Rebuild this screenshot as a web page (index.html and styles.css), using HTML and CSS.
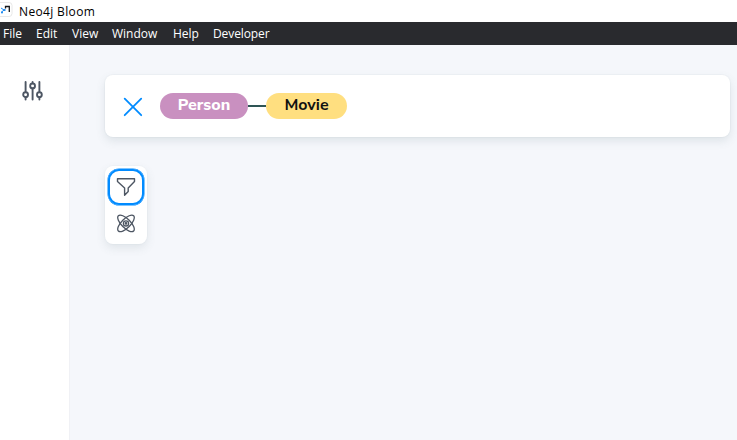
FILE: index.html
```html
<!DOCTYPE html>
<html lang="en">
<head>
<meta charset="utf-8">
<title>Neo4j Bloom</title>
<link rel="stylesheet" href="styles.css">
</head>
<body>
<header class="titlebar">
  <svg class="logo" width="14" height="16" viewBox="0 0 14 16" fill="none">
    <rect x="-4" y=".5" width="16" height="14" rx="3" fill="#fff" stroke="#e8e8e8"/>
    <path d="M5.5 6.5V4.5H9.3V10" stroke="#15171a" stroke-width="1.3"/>
    <path d="M1 6L4 8L1 10.5" stroke="#1687f0" stroke-width="1"/>
    <circle cx="4.6" cy="8" r="1.1" fill="#1687f0"/>
    <circle cx="2" cy="10.4" r="1" fill="#1687f0"/>
  </svg>
  <span class="title">Neo4j Bloom</span>
</header>
<nav class="menubar">
  <span class="file">File</span><span class="edit">Edit</span><span class="view">View</span><span class="window">Window</span><span class="help">Help</span><span class="developer">Developer</span>
</nav>
<div class="app">
  <aside class="sidebar">
    <svg width="22" height="20" viewBox="0 0 22 20" fill="none" stroke="#4d5663" stroke-width="1.9" stroke-linecap="round">
      <path d="M3.6 1V10.8M3.6 16.2V18.5M10.6 1V2.2M10.6 7.6V18.5M17.4 1V10.8M17.4 16.2V18.5"/>
      <circle cx="3.6" cy="13.7" r="2.4"/><circle cx="10.6" cy="4.9" r="2.4"/><circle cx="17.4" cy="13.7" r="2.4"/>
    </svg>
  </aside>
  <main class="scene">
    <section class="search">
      <svg class="clear" width="20" height="20" viewBox="0 0 20 20" fill="none" stroke="#018bff" stroke-width="1.8" stroke-linecap="round">
        <path d="M1.7 1.7L18.2 18.2M18.2 1.7L1.7 18.2"/>
      </svg>
      <span class="pill person">Person</span>
      <span class="link"></span>
      <span class="pill movie">Movie</span>
    </section>
    <section class="tools">
      <div class="tool active">
        <svg width="20" height="20" viewBox="0 0 20 20" fill="none" stroke="#4d5663" stroke-width="1.4" stroke-linejoin="round">
          <path d="M1.5 1.7H18.5V4.5L12.2 11V14.6L8.6 18.2V11L1.5 4.5Z"/>
        </svg>
      </div>
      <div class="tool">
        <svg width="20" height="20" viewBox="0 0 20 20" fill="none" stroke="#4d5663" stroke-width="1.3">
          <ellipse cx="10" cy="10.4" rx="10.8" ry="4.5" transform="rotate(45 10 10.4)"/>
          <ellipse cx="10" cy="10.4" rx="10.8" ry="4.5" transform="rotate(-45 10 10.4)"/>
          <circle cx="10" cy="10.4" r="2.6"/>
          <circle cx="10" cy="10.4" r=".7" fill="#4d5663"/>
        </svg>
      </div>
    </section>
  </main>
</div>
</body>
</html>
```

FILE: styles.css
```css
* { box-sizing: border-box; }
body {
  margin: 0;
  height: 440px;
  display: flex;
  flex-direction: column;
  overflow: hidden;
  background: #fff;
  font-family: "Open Sans", "Noto Sans", sans-serif;
}
.titlebar {
  height: 22px;
  display: flex;
  align-items: flex-start;
  color: #000;
  font-size: 12px;
}
.logo { margin-top: 2px; }
.title { margin-left: 5px; line-height: 23px; letter-spacing: .35px; }
.menubar {
  height: 23px;
  display: flex;
  padding-left: 3px;
  background: #292a2e;
  color: #fff;
  font-size: 12px;
  line-height: 23px;
  white-space: nowrap;
}
.file { width: 33px; }
.edit { width: 36px; }
.view { width: 40px; }
.window { width: 61px; }
.help { width: 40px; }
.developer { letter-spacing: -.1px; }
.app { flex: 1; display: flex; }
.sidebar {
  width: 69px;
  padding: 36px 0 0 22px;
  background: #fff;
}
.sidebar svg, .tool svg, .clear { display: block; }
.scene {
  flex: 1;
  padding: 30px 7px 0 36px;
  background: #f5f7fb;
  box-shadow: inset 1px 0 #f0f1f5;
}
.search {
  height: 62px;
  display: flex;
  align-items: center;
  padding-left: 18px;
  border-radius: 8px;
  background: #fff;
  box-shadow: 0 0 1px 1px rgba(70, 100, 110, .03), 0 4px 10px rgba(70, 100, 110, .13);
}
.clear { margin-top: 2px; }
.pill {
  height: 26px;
  border-radius: 13px;
  text-align: center;
  font-family: "Nunito Sans", Nunito, "Open Sans", sans-serif;
  font-size: 16px;
  font-weight: 800;
  line-height: 24px;
}
.person { width: 88px; margin-left: 17px; background: #c990c0; color: #fff; }
.link { width: 18px; height: 2px; background: #2e5555; }
.movie { width: 81px; background: #ffdf80; color: #111; font-weight: 700; }
.tools {
  width: 42px;
  height: 78px;
  margin-top: 29px;
  padding: 3px;
  border-radius: 8px;
  background: #fff;
  box-shadow: 0 0 1px 1px rgba(70, 100, 110, .02), 0 4px 10px rgba(70, 100, 110, .12);
}
.tool {
  width: 36px;
  height: 36px;
  display: grid;
  place-items: center;
  border-radius: 11px;
}
.active { border: 2px solid #018bff; box-shadow: 0 0 0 .5px #018bff; }
```
